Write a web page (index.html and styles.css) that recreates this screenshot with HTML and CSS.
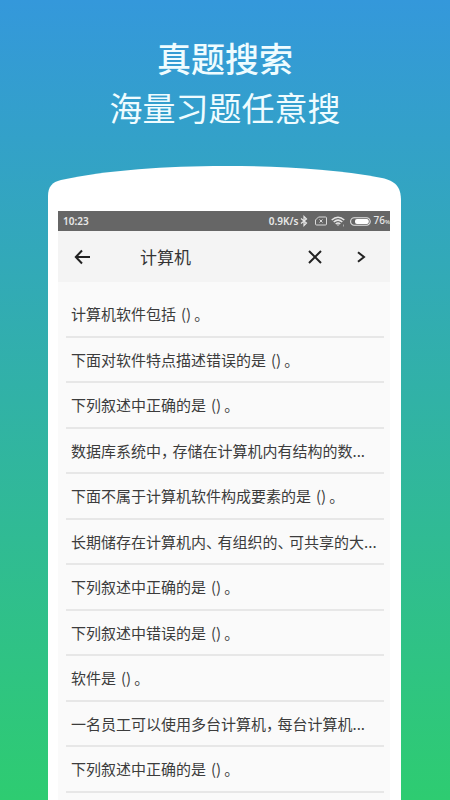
FILE: index.html
```
<!DOCTYPE html>
<html lang="zh-CN">
<head>
    <meta charset="UTF-8">
    <meta name="viewport" content="width=device-width, initial-scale=1">
    <title>真题搜索</title>
    <link rel="stylesheet" href="styles.css">
</head>
<body>
    <header class="intro">
        <h1>真题搜索</h1>
        <p>海量习题任意搜</p>
    </header>

    <div class="phone">
        <svg class="phone-top" viewBox="0 0 353 45" preserveAspectRatio="none" aria-hidden="true">
            <path d="M0 45V30C0 21 4 16 13 14C60 4 118 0 176.500 0S285 3 334 12C347 15 353 20 353 35V45Z" fill="#fff"/>
        </svg>

        <main class="screen">
            <div class="status-bar">
                <span class="time">10:23</span>
                <span class="speed">0.9K/s</span>
                <svg class="bluetooth" width="8" height="12" viewBox="0 0 8 12" fill="none" stroke="#e6e6e6" stroke-width="1.200">
                    <path d="M1 3.500L6.500 8L4 10.500V1.500L6.500 4L1 8.500"/>
                </svg>
                <svg class="sim" width="12" height="10" viewBox="0 0 12 10" fill="none" stroke="#d8d8d8" stroke-width="1">
                    <path d="M3.500 1H10.500Q11.500 1 11.500 2V8Q11.500 9 10.500 9H1.500Q.5 9 .5 8V4ZM4.500 3.500L7.500 6.500M7.500 3.500L4.500 6.500"/>
                </svg>
                <svg class="wifi" width="15" height="11" viewBox="0 0 15 11" fill="none" stroke="#e6e6e6" stroke-width="1.500">
                    <path d="M.7 4Q7 -1.500 13.300 4M2.700 6Q7 2.300 11.300 6M4.700 8Q7 6 9.300 8"/>
                    <path d="M5.800 8.500L7 10L8.200 8.500Z" fill="#e6e6e6" stroke="none"/>
                    <path d="M12.500 8.500V10.500" stroke="#aaa" stroke-width="1"/>
                </svg>
                <svg class="battery" width="21" height="9" viewBox="0 0 21 9">
                    <rect x=".6" y=".8" width="19.600" height="7.400" rx="3.700" fill="none" stroke="#e6e6e6" stroke-width="1.100"/>
                    <rect x="5" y="1.900" width="13.800" height="5.200" rx="2" fill="#fff"/>
                </svg>
                <span class="percent">76<small>%</small></span>
            </div>

            <form class="search-bar" role="search">
                <button type="button" class="back" aria-label="返回">
                    <svg width="18" height="16" viewBox="0 0 18 16">
                        <path d="M16 8H2M8 1.500L1.800 8L8 14.500"/>
                    </svg>
                </button>
                <input type="text" value="计算机" aria-label="搜索题目">
                <button type="button" aria-label="清除">
                    <svg width="16" height="16" viewBox="0 0 16 16">
                        <path d="M2 2L14 14M14 2L2 14"/>
                    </svg>
                </button>
                <button type="submit" aria-label="搜索">
                    <svg width="16" height="16" viewBox="0 0 16 16">
                        <path d="M5 3.200L11 8L5 12.800"/>
                    </svg>
                </button>
            </form>

            <ul class="results">
                <li>计算机软件包括<span class="blank">()</span>。</li>
                <li>下面对软件特点描述错误的是<span class="blank">()</span>。</li>
                <li>下列叙述中正确的是<span class="blank">()</span>。</li>
                <li>数据库系统中<span class="mark">，</span>存储在计算机内有结构的数...</li>
                <li>下面不属于计算机软件构成要素的是<span class="blank">()</span>。</li>
                <li>长期储存在计算机内<span class="mark">、</span>有组织的<span class="mark">、</span>可共享的大...</li>
                <li>下列叙述中正确的是<span class="blank">()</span>。</li>
                <li>下列叙述中错误的是<span class="blank">()</span>。</li>
                <li>软件是<span class="blank">()</span>。</li>
                <li>一名员工可以使用多台计算机<span class="mark">，</span>每台计算机...</li>
                <li>下列叙述中正确的是<span class="blank">()</span>。</li>
            </ul>
        </main>
    </div>
</body>
</html>
```
FILE: styles.css
```
* {
    box-sizing: border-box;
}

body {
    display: flex;
    flex-direction: column;
    height: 100vh;
    margin: 0;
    overflow: hidden;
    font-family: "Noto Sans CJK SC", sans-serif;
    background: linear-gradient(to bottom, #3498db, #2ecc71);
}

.intro {
    padding-top: 33px;
    text-align: center;
    color: #effcff;
}

.intro h1 {
    margin: 0;
    font-size: 34px;
    line-height: 50px;
    font-weight: 500;
}

.intro p {
    margin: 0;
    font-size: 33px;
    line-height: 48px;
    font-weight: 400;
}

.phone {
    flex: 1;
    display: flex;
    flex-direction: column;
    margin: 35px 49px 0 48px;
}

.phone-top {
    display: block;
    width: 100%;
    height: 45px;
    flex: none;
}

.screen {
    flex: 1;
    background: #fafafa;
    border: solid #fff;
    border-width: 0 11px 0 10px;
}

.status-bar {
    display: flex;
    align-items: center;
    height: 20px;
    padding-left: 5px;
    background: #666;
    color: #e8e8e8;
    font-family: "Noto Sans", sans-serif;
    font-size: 10px;
    line-height: 18px;
    font-weight: 600;
    white-space: nowrap;
}

.status-bar svg {
    flex: none;
}

.time {
    margin-right: auto;
}

.bluetooth {
    margin: 0 7px 0 2px;
}

.wifi {
    margin: 0 4px 0 4px;
}

.percent {
    margin-left: 2px;
    font-weight: 500;
}

.percent small {
    font-size: 6px;
}

.search-bar {
    display: flex;
    align-items: center;
    height: 51px;
    padding: 0 6px 0 2px;
    background: #f4f4f4;
}

.search-bar button {
    display: flex;
    align-items: center;
    justify-content: center;
    width: 46px;
    height: 46px;
    padding: 0;
    border: none;
    background: none;
    cursor: pointer;
}

.search-bar path {
    fill: none;
    stroke: #222;
    stroke-width: 2;
}

.search-bar input {
    flex: 1;
    min-width: 0;
    margin-left: 34px;
    padding: 0;
    border: none;
    outline: none;
    background: none;
    color: #333;
    font-family: inherit;
    font-size: 17px;
}

.results {
    margin: 0;
    padding: 10px 6px 0 8px;
    list-style: none;
}

.results li {
    height: 45px;
    padding-left: 5px;
    border-bottom: 2px solid #e7e7e7;
    color: #3c3c3c;
    font-size: 15px;
    line-height: 44px;
    white-space: nowrap;
}

.results li:nth-child(odd) {
    height: 46px;
}

.blank {
    padding: 0 3px 0 5px;
}

/* half-width comma and pause mark */
.mark {
    margin-right: 4px;
    font-feature-settings: "halt";
}
```
